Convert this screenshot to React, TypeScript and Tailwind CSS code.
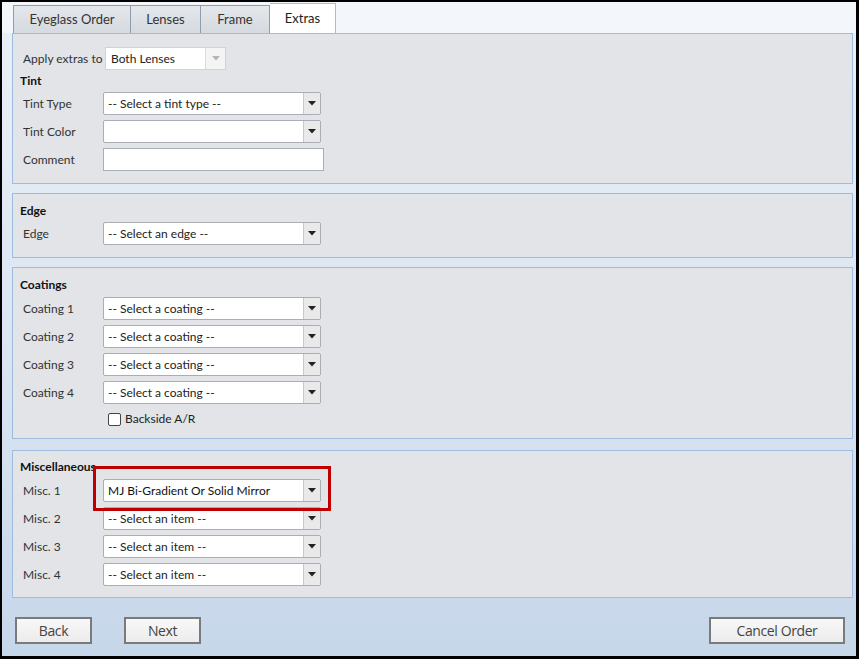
import type { ReactNode } from 'react';

const font = { fontFamily: 'Lato, "Open Sans", sans-serif' };

const Arrow = ({ muted }: { muted?: boolean }) => (
  <svg width="8" height="5" viewBox="0 0 8 5">
    <path d="M0 0 L8 0 L4 4.5 Z" fill={muted ? '#b5b5b5' : '#222'} />
  </svg>
);

const Select = ({ value, dark }: { value: string; dark?: boolean }) => (
  <div className="flex h-[23px] w-[218px] items-stretch rounded-[2px] border border-[#a9adb4] bg-white">
    <div className={`flex flex-1 items-center pl-[4px] text-[12px] ${dark ? 'text-[#111]' : 'text-[#222]'}`}>{value}</div>
    <div className="flex w-[17px] items-center justify-center border-l border-[#c6c8cc] bg-[#e9e9ea]">
      <Arrow />
    </div>
  </div>
);

const Row = ({ label, children }: { label: string; children: ReactNode }) => (
  <div className="flex h-[23px] items-center">
    <div className="w-[80px] text-[12px] text-[#333]">{label}</div>
    {children}
  </div>
);

const Panel = ({ className, children }: { className: string; children: ReactNode }) => (
  <div className={`relative border border-[#9ebbe0] bg-[#e2e4e7] pl-[10px] ${className}`}>{children}</div>
);

const Heading = ({ children, className = '' }: { children: ReactNode; className?: string }) => (
  <div className={`h-4 text-[12px] leading-4 font-bold text-[#111] -ml-[3px] ${className}`}>{children}</div>
);

const Tab = ({ label, w, active }: { label: string; w: string; active?: boolean }) => (
  <div
    className={`flex items-center justify-center border border-b-0 text-[13px] ${w} ${
      active
        ? 'h-[30px] border-[#a9bcd3] bg-white text-[#222]'
        : 'h-[28px] border-[#8e9cad] bg-gradient-to-b from-[#e4e7eb] to-[#d5dae0] text-[#333]'
    }`}
  >
    {label}
  </div>
);

const Button = ({ label, w }: { label: string; w: string }) => (
  <div
    className={`flex h-[27px] items-center justify-center border-2 border-[#7a7a7a] bg-gradient-to-b from-[#f8f8f8] to-[#ececec] text-[14px] text-[#444] ${w}`}
    style={{ fontFamily: '"Open Sans", sans-serif', letterSpacing: '-0.4px' }}
  >
    {label}
  </div>
);

export default function App() {
  return (
    <div
      className="flex h-[659px] w-[859px] flex-col border-t-2 border-l-2 border-r-[3px] border-b-[3px] border-black bg-gradient-to-b from-[#eaf0f7] via-[#dce6f1] to-[#c6d7ea]"
      style={font}
    >
      <div className="flex h-[31px] items-end bg-[#f3f6fa] pl-[11px]">
        <Tab label="Eyeglass Order" w="w-[118px]" />
        <Tab label="Lenses" w="w-[70px] border-l-0" />
        <Tab label="Frame" w="w-[69px] border-l-0" />
        <Tab label="Extras" w="w-[66px] border-l-0" active />
      </div>

      <div className="ml-[10px] mr-[3px] flex flex-col">
        <Panel className="h-[151px] pt-[13px]">
          <div className="flex h-[23px] items-center">
            <div className="w-[82px] text-[12px] text-[#333]">Apply extras to</div>
            <div className="flex h-[23px] w-[121px] items-stretch border border-[#d0d2d5] bg-white">
              <div className="flex flex-1 items-center pl-[5px] text-[12px] text-[#222]">Both Lenses</div>
              <div className="flex w-[20px] items-center justify-center border-l border-[#dcdcdc] bg-[#f4f4f4]">
                <Arrow muted />
              </div>
            </div>
          </div>
          <Heading className="mt-[3px]">Tint</Heading>
          <div className="mt-[3px] flex flex-col gap-[5px]">
            <Row label="Tint Type"><Select value="-- Select a tint type --" /></Row>
            <Row label="Tint Color"><Select value="" /></Row>
            <Row label="Comment">
              <div className="h-[23px] w-[221px] border border-[#a9adb4] bg-white" />
            </Row>
          </div>
        </Panel>

        <Panel className="mt-[9px] h-[65px] pt-[9px]">
          <Heading>Edge</Heading>
          <div className="mt-[3px]">
            <Row label="Edge"><Select value="-- Select an edge --" /></Row>
          </div>
        </Panel>

        <Panel className="mt-[9px] h-[172px] pt-[9px]">
          <Heading>Coatings</Heading>
          <div className="mt-[4px] flex flex-col gap-[5px]">
            {[1, 2, 3, 4].map(n => (
              <Row key={n} label={`Coating ${n}`}><Select value="-- Select a coating --" /></Row>
            ))}
          </div>
          <div className="mt-[6px] flex h-[18px] items-center pl-[85px]">
            <div className="h-[13px] w-[13px] rounded-[2px] border border-[#444] bg-white" />
            <span className="ml-[4px] text-[12px] text-[#222]">Backside A/R</span>
          </div>
        </Panel>

        <Panel className="mt-[11px] h-[148px] pt-[8px]">
          <Heading>Miscellaneous</Heading>
          <div className="mt-[4px] flex flex-col gap-[5px]">
            <Row label="Misc. 1"><Select value="MJ Bi-Gradient Or Solid Mirror" dark /></Row>
            {[2, 3, 4].map(n => (
              <Row key={n} label={`Misc. ${n}`}><Select value="-- Select an item --" /></Row>
            ))}
          </div>
          {/* annotation box */}
          <div className="absolute left-[80px] top-[15px] h-[45px] w-[238px] border-[3px] border-[#c00000]" />
        </Panel>
      </div>

      <div className="mt-[19px] flex pl-[13px] pr-[11px]">
        <Button label="Back" w="w-[77px]" />
        <div className="ml-[32px]"><Button label="Next" w="w-[77px]" /></div>
        <div className="ml-auto"><Button label="Cancel Order" w="w-[136px]" /></div>
      </div>
    </div>
  );
}
